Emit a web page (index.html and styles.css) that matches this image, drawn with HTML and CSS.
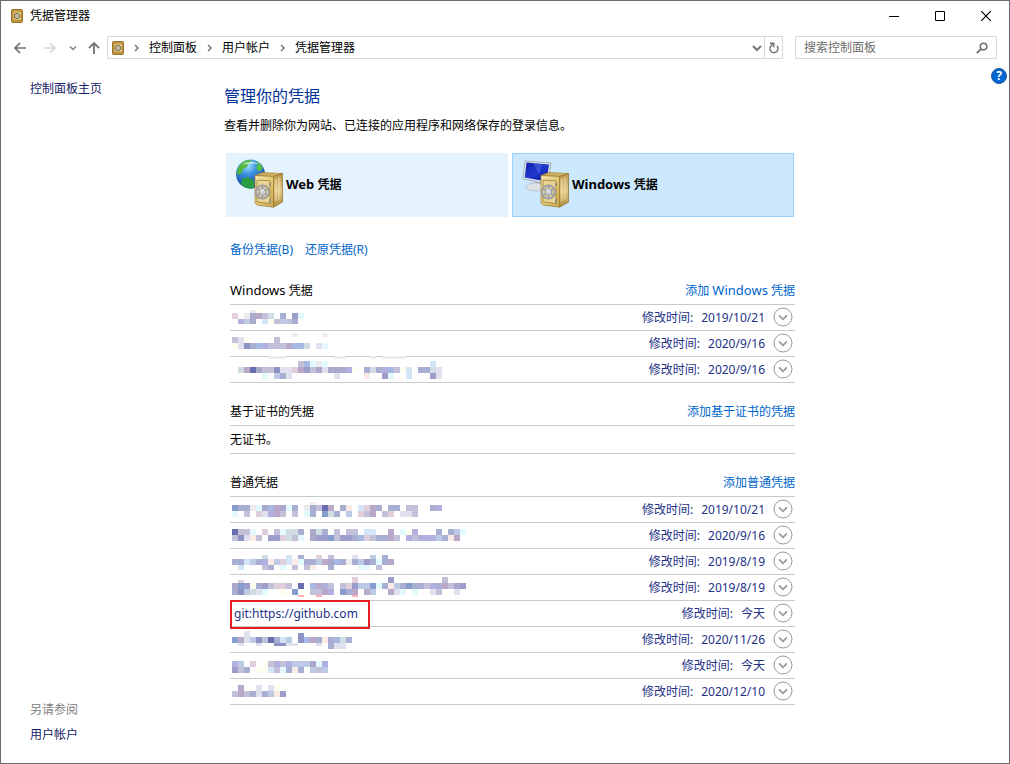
FILE: index.html
```
<!DOCTYPE html>
<html lang="zh-CN">
<head>
<meta charset="utf-8">
<title>凭据管理器</title>
<link rel="stylesheet" href="styles.css">
</head>
<body>
<svg class="defs" aria-hidden="true">
  <defs>
    <linearGradient id="gold" x1="0" y1="0" x2="1" y2="1"><stop offset="0" stop-color="#f6e7ae"/><stop offset=".5" stop-color="#e6cb78"/><stop offset="1" stop-color="#c9a548"/></linearGradient>
    <linearGradient id="goldside" x1="0" y1="0" x2="0" y2="1"><stop offset="0" stop-color="#b8964a"/><stop offset=".5" stop-color="#e4cb8a"/><stop offset="1" stop-color="#b08a3a"/></linearGradient>
    <radialGradient id="sea" cx=".4" cy=".2" r=".8"><stop offset="0" stop-color="#a8e4ff"/><stop offset=".4" stop-color="#3a90e0"/><stop offset="1" stop-color="#1c3c98"/></radialGradient>
    <linearGradient id="screen" x1="0" y1="0" x2="1" y2="1"><stop offset="0" stop-color="#1420a8"/><stop offset=".5" stop-color="#2038d0"/><stop offset="1" stop-color="#0a1088"/></linearGradient>
    <symbol id="vault" viewBox="0 0 12 14">
      <rect x=".5" y=".5" width="11" height="13" rx="1" fill="#c29a3e" stroke="#96742c"/>
      <rect x="2" y="2" width="8" height="9.500" fill="#d9bc6c" stroke="#a9853a" stroke-width=".7"/>
      <circle cx="6" cy="7" r="2.700" fill="#c8c2ae" stroke="#776a48" stroke-width=".8"/>
      <circle cx="6" cy="7" r="1.200" fill="#f0ede2" stroke="#8b815f" stroke-width=".6"/>
      <path d="M9.500 4v1M9.500 9v1" stroke="#f4ecd0"/>
    </symbol>
    <symbol id="safe" viewBox="0 0 30 37">
      <path d="M1 4.500 9 1.500 28.500 2.500 19.500 5.500Z" fill="#cfae5c" stroke="#a98a3c" stroke-width=".7"/>
      <path d="M19.500 5.500 28.500 2.500V31L19.500 36.200Z" fill="url(#goldside)" stroke="#8d6a25" stroke-width=".7"/>
      <path d="M1 4.500 19.500 5.500V36.200L3 34 1 32Z" fill="url(#gold)" stroke="#9a7a30" stroke-width=".7"/>
      <path d="M3 9 16 9.800V32.500L3 31Z" fill="#ead594" stroke="#8f742d" stroke-width=".7"/>
      <path d="M22 8v22M25 6.500v22" stroke="#f7e9bb" stroke-width="1.200" opacity=".7"/>
      <path d="M16 12v3M16 28v4" stroke="#8b8a82" stroke-width="1.600"/>
      <circle cx="8.500" cy="21" r="6.600" fill="#d9cb9c" stroke="#808286" stroke-width="1.700"/>
      <circle cx="8.500" cy="21" r="6.600" fill="none" stroke="#d3d6db" stroke-width=".6"/>
      <path d="M8.500 14.500v13M2.800 17.700l11.400 6.600M14.200 17.700L2.800 24.300" stroke="#94979d" stroke-width="1.300"/>
      <circle cx="8.500" cy="21" r="3.200" fill="#cdd1d8" stroke="#85888e" stroke-width=".7"/>
      <path d="M6.600 20.500a2 2 0 0 1 3-1.500" fill="none" stroke="#fff"/>
    </symbol>
    <symbol id="expand" viewBox="0 0 20 20">
      <circle cx="10" cy="10" r="9" fill="#fff" stroke="#999" stroke-width="1"/>
      <path d="M6 8.300l4 4 4-4" fill="none" stroke="#999" stroke-width="1.700"/>
    </symbol>
    <symbol id="crumb" viewBox="0 0 8 8"><path d="M2 1l3 3-3 3" fill="none" stroke="#777" stroke-width="1.500"/></symbol>
  </defs>
</svg>

<div class="window">
  <header class="titlebar">
    <svg class="vault"><use href="#vault"/></svg>
    <span class="title">凭据管理器</span>
    <button class="caption" aria-label="最小化"><svg width="10" height="10"><path d="M0 5.500h10" stroke="#000"/></svg></button>
    <button class="caption" aria-label="最大化"><svg width="10" height="10"><path d="M.5 .5h9v9h-9z" fill="none" stroke="#000"/></svg></button>
    <button class="caption" aria-label="关闭"><svg width="10" height="10"><path d="M0 0l10 10M10 0L0 10" stroke="#000" stroke-width="1.200"/></svg></button>
  </header>

  <nav class="navbar">
    <div class="history">
      <button class="tool" aria-label="后退"><svg width="14" height="12"><path d="M13 6H2M7 1L2 6l5 5" fill="none" stroke="#707070" stroke-width="1.700"/></svg></button>
      <button class="tool" aria-label="前进"><svg width="14" height="12"><path d="M1 6h11M7 1l5 5-5 5" fill="none" stroke="#d6d6d6" stroke-width="1.700"/></svg></button>
      <button class="tool narrow" aria-label="最近位置"><svg width="8" height="6"><path d="M1 1.500l3 3 3-3" fill="none" stroke="#808080" stroke-width="1.500"/></svg></button>
      <button class="tool" aria-label="上移"><svg width="12" height="14"><path d="M6 13V2M1 7l5-5 5 5" fill="none" stroke="#777" stroke-width="1.900"/></svg></button>
    </div>
    <div class="address">
      <svg class="vault"><use href="#vault"/></svg>
      <svg class="crumb"><use href="#crumb"/></svg>
      <a href="#">控制面板</a>
      <svg class="crumb"><use href="#crumb"/></svg>
      <a href="#">用户帐户</a>
      <svg class="crumb"><use href="#crumb"/></svg>
      <a href="#">凭据管理器</a>
      <button class="drop" aria-label="展开地址"><svg width="10" height="8"><path d="M1 2l4 4 4-4" fill="none" stroke="#777" stroke-width="2"/></svg></button>
      <button class="refresh" aria-label="刷新"><svg width="10" height="12"><path d="M8 4a4 4 0 1 1-6 0Q3 2.500 4.500 1.500" fill="none" stroke="#777" stroke-width="1.600"/><path d="M.8 1.200h4v4" fill="none" stroke="#777" stroke-width="1.500"/></svg></button>
    </div>
    <label class="search">
      <input type="text" placeholder="搜索控制面板" aria-label="搜索控制面板">
      <svg width="12" height="12"><circle cx="7.500" cy="4.500" r="3.300" fill="none" stroke="#707070" stroke-width="1.600"/><path d="M5 7L.8 11.200" stroke="#707070" stroke-width="1.800"/></svg>
    </label>
  </nav>

  <div class="body">
    <aside class="side">
      <a href="#">控制面板主页</a>
      <div class="also"><span>另请参阅</span><a href="#">用户帐户</a></div>
    </aside>

    <main class="content">
      <h1>管理你的凭据</h1>
      <p class="intro">查看并删除你为网站、已连接的应用程序和网络保存的登录信息。</p>

      <div class="tiles">
        <button class="tile">
          <svg width="50" height="50" aria-hidden="true">
            <circle cx="15.500" cy="15" r="14.500" fill="url(#sea)"/>
            <path d="M5 6Q9 1 15 1l2 2-4 2-1 3-4 2-1 4-5 2Q2 9 5 6Z" fill="#52b63c"/>
            <path d="M20 2q6 2 8 7l-4 4-3-4 2-3Z" fill="#58bf46"/>
            <path d="M7 20l6-2 6 4v7q-8 2-13-4Z" fill="#299d42"/>
            <path d="M7 6Q14 0 24 5Q14 4 7 6Z" fill="#dffaff" opacity=".7"/>
            <use href="#safe" x="19" y="12" width="30" height="37"/>
          </svg>
          <span><span class="latin">Web</span> 凭据</span>
        </button>
        <button class="tile selected">
          <svg width="50" height="50" aria-hidden="true">
            <path d="M14 23h7l1 6h-9Z" fill="#b8bcc3"/>
            <ellipse cx="14" cy="28" rx="9" ry="4" fill="#dfe2e7" stroke="#aeb3bb" stroke-width=".7"/>
            <path d="M4 2 30 4 27 25 2 20Z" fill="#dce2ec" stroke="#99a3b4" stroke-width=".8"/>
            <path d="M5.500 3.500 28 5.500 25.500 22.500 3.800 18.500Z" fill="url(#screen)"/>
            <path d="M12 4l9 1-3 10Z" fill="#6d88f4" opacity=".35"/>
            <use href="#safe" x="19" y="12" width="30" height="37"/>
          </svg>
          <span><span class="latin">Windows</span> 凭据</span>
        </button>
      </div>

      <div class="actions"><a href="#">备份凭据(B)</a><a href="#">还原凭据(R)</a></div>

      <section class="group">
        <div class="head"><h2><span class="latin">Windows</span> 凭据</h2><a href="#">添加 <span class="latin">Windows</span> 凭据</a></div>
        <ul>
          <li data-mosaic="w1" data-date="2019/10/21"></li>
          <li data-mosaic="w2" data-date="2020/9/16"></li>
          <li data-mosaic="w3" data-date="2020/9/16"></li>
        </ul>
      </section>

      <section class="group">
        <div class="head"><h2>基于证书的凭据</h2><a href="#">添加基于证书的凭据</a></div>
        <p class="empty">无证书。</p>
      </section>

      <section class="group">
        <div class="head"><h2>普通凭据</h2><a href="#">添加普通凭据</a></div>
        <ul>
          <li data-mosaic="g1" data-date="2019/10/21"></li>
          <li data-mosaic="g2" data-date="2020/9/16"></li>
          <li data-mosaic="g3" data-date="2019/8/19"></li>
          <li data-mosaic="g4" data-date="2019/8/19"></li>
          <li data-date="今天"><a class="name" href="#">git:https://github.com</a><span class="mark"></span></li>
          <li data-mosaic="g6" data-date="2020/11/26"></li>
          <li data-mosaic="g7" data-date="今天"></li>
          <li data-mosaic="g8" data-date="2020/12/10"></li>
        </ul>
      </section>
    </main>

    <button class="help" aria-label="帮助">?</button>
  </div>
</div>
<script src="app.js"></script>
</body>
</html>
```
FILE: styles.css
```
* { box-sizing: border-box; }
body {
  margin: 0;
  background: #fff;
  color: #000;
  font: 12px/20px "Noto Sans", "Noto Sans CJK SC", sans-serif;
}
button { padding: 0; border: 0; background: none; font: inherit; color: inherit; }
a { color: inherit; text-decoration: none; }
h1, h2, p, ul { margin: 0; padding: 0; font-weight: 400; }
svg { display: block; flex: none; }
.defs { position: absolute; width: 0; height: 0; }
.latin { font-size: 13px; }

.window {
  display: flex;
  flex-direction: column;
  min-height: 100vh;
  border: 1px solid #6b696b;
}

.titlebar { display: flex; align-items: center; height: 29px; padding-left: 10px; }
.vault { width: 12px; height: 14px; }
.title { flex: 1; margin-left: 7px; }
.caption { display: flex; align-items: center; justify-content: center; width: 46px; height: 28px; }

.navbar { display: flex; align-items: center; height: 35px; padding-right: 12px; }
.history { display: flex; align-items: center; width: 106px; padding-left: 12px; }
.tool { display: flex; align-items: center; justify-content: center; width: 14px; height: 22px; margin-right: 16px; }
.narrow { width: 8px; margin: 0 10px 0 -4px; }
.history .tool:last-child { margin-right: 0; }
.address, .search { display: flex; align-items: center; height: 23px; border: 1px solid #d9d9d9; }
.address { flex: 1; padding-left: 4px; }
.crumb { width: 8px; height: 8px; margin: 0 8px 0 9px; }
.drop { display: flex; justify-content: center; align-items: center; width: 14px; height: 21px; margin-left: auto; }
.refresh { display: flex; justify-content: center; align-items: center; width: 18px; height: 21px; border-left: 1px solid #d9d9d9; }
.search { width: 202px; margin-left: 12px; padding: 0 8px; }
.search input { flex: 1; min-width: 0; padding: 0; border: 0; outline: 0; background: none; font: inherit; }
.search input::placeholder { color: #6d6d6d; opacity: 1; }

.body { display: flex; flex: 1; }
.side {
  display: flex;
  flex-direction: column;
  justify-content: space-between;
  width: 223px;
  padding: 14px 0 18px 29px;
  color: #151c66;
}
.also { display: flex; flex-direction: column; gap: 5px; }
.also span { color: #808080; }
.help {
  width: 16px;
  height: 16px;
  margin: 3px 2px 0 auto;
  border: 1px solid #1c5a9c;
  border-radius: 50%;
  background: #0068d0;
  color: #fff;
  font-size: 12px;
  font-weight: 700;
  line-height: 14px;
}

.content { flex: 0 1 572px; padding-top: 19px; }
h1 { color: #003399; font-size: 16px; line-height: 24px; }
.intro { margin-top: 8px; }
.tiles { display: grid; grid-template-columns: 1fr 1fr; gap: 4px; margin: 17px 2px 0; }
.tile {
  display: flex;
  align-items: center;
  height: 64px;
  padding: 0 0 2px 8px;
  border: 1px solid #e5f3ff;
  background: #e5f3ff;
  font-weight: 700;
  gap: 1px;
}
.selected { border-color: #99d1ff; background: #cce8ff; }
.actions { display: flex; gap: 12px; margin: 23px 0 17px 6px; color: #0066cc; }

.group { margin: 0 1px 15px 6px; }
.head { display: flex; justify-content: space-between; align-items: center; height: 28px; border-bottom: 1px solid #cacaca; }
.head h2 { font-size: 12px; }
.head a { color: #0066cc; }
.empty { height: 28px; border-bottom: 1px solid #cacaca; line-height: 27px; }
.group:last-child { margin-bottom: 0; }
.group li {
  position: relative;
  display: flex;
  align-items: center;
  height: 26px;
  border-bottom: 1px solid #cacaca;
  color: #1e3287;
}
.name { margin-left: 4px; }
.mosaic { width: 242px; height: 25px; overflow: visible; }
.when { display: flex; gap: 8px; margin-left: auto; }
.expand { width: 20px; height: 20px; margin: 0 2px 1px 8px; }
.expand svg { width: 20px; height: 20px; }
.mark {
  position: absolute;
  z-index: 1;
  inset: -1px auto -3px 0;
  width: 140px;
  border: 2px solid #e81c24;
}
```
FILE: app.js
```
// Obscured credential names: each row is [y, height, cells], one letter per 6px cell.
const palette = {
  a: '#a9aed3', b: '#b1b0e0', c: '#c3c1da', d: '#d0dde4', e: '#ececee', f: '#e2fafe',
  g: '#686eb0', h: '#8d91c3', i: '#9c9dcb', j: '#aaa9cc', k: '#b9a8c8', l: '#e0cedb',
  m: '#fbebe4', n: '#fdfdf0', o: '#d2e6f8', p: '#a6b9e4', q: '#bdcae5', r: '#ffb0b8',
  s: '#879dce', t: '#e0e0ee'
};
const mosaics = {
  w1: [[5, 3, '...en'], [8, 6, 'l.ejkcd.a.if'], [14, 5, '.bqj.oncqca']],
  w2: [[2, 4, '..........e....e'], [6, 6, 'ctn....c'], [12, 6, 'nthapbccckppd.tf']],
  w3: [[-1, 3, '......eee........ee....e.eeee'], [4, 6, '...........cpfef.................o'],
    [10, 6, '.dkgjcchttlkicjtjjjbn.adabpcno.aadt'], [16, 6, '.....f.qat.......t....m..if..o...it']],
  g1: [[5, 3, '.............m'], [8, 6, 'saaefjpkjfa.eacgk.am.olka.aa.cc..ab'],
    [14, 6, 'f.c.ltbkc.c.fa.sda.q.lck.cl.ttc']],
  g2: [[6, 6, 'gccf.l.cfdda.jda.c.cc.oo..k.fnb...a.aqf'], [12, 6, 'chtmc.iildcf.jiisciiaplcaakc.bcbbbqamk']],
  g3: [[6, 4, '.....d...o.a..l.c...t..q.a'], [10, 6, 'aaoqabmqlomfaaqkjpaeaqiafak'],
    [16, 5, '.o...ca.f.c.cm..a....ff.c']],
  g4: [[2, 6, '....................l.....i........c'], [5, 3, '.l'],
    [8, 6, 'jsinaicllc.g.pkbc.cliqqsfamqasaacbakcji'], [14, 6, 'ahqdtf..n.s..cckb.sak.kq..ktf.f..tc..t'],
    [20, 2, '...........r..r.....r']],
  g6: [[4, 6, '..t'], [6, 4, '...........h'], [10, 6, 'sktqhcgaoq.hpkamapda'], [16, 3, '.t..t..hhtt...t.att'], [19, 3, '................att']],
  g7: [[8, 6, 'bq.l.ncbcbqqqjfb'], [14, 6, 'ica.nnocfama.qcq']],
  g8: [[6, 6, '.k..t.tn'], [12, 6, 'ckcataqmi']]
};

function drawMosaic(rows) {
  const rects = rows.flatMap(([y, h, cells]) => [...cells].map((cell, i) =>
    cell === '.' ? '' : `<rect x="${2 + i * 6}" y="${y}" width="6" height="${h}" fill="${palette[cell]}"/>`));
  return `<svg class="mosaic" shape-rendering="crispEdges" aria-hidden="true">${rects.join('')}</svg>`;
}

document.querySelectorAll('.group li').forEach(item => {
  const { mosaic, date } = item.dataset;
  if (mosaic) item.insertAdjacentHTML('beforeend', drawMosaic(mosaics[mosaic]));
  item.insertAdjacentHTML('beforeend',
    `<span class="when"><span>修改时间:</span><span>${date}</span></span>` +
    '<button class="expand" aria-label="展开"><svg><use href="#expand"/></svg></button>');
});
```
